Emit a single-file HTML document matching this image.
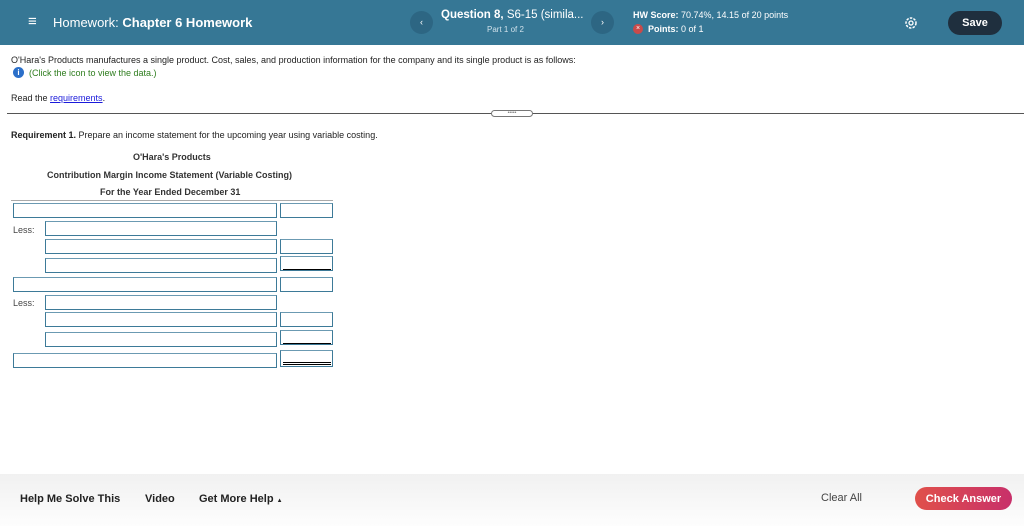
<!DOCTYPE html><html><head><style>
*{margin:0;padding:0;box-sizing:border-box}
body{width:1024px;height:526px;overflow:hidden;background:#fff;font-family:"Liberation Sans",Arial,sans-serif;position:relative;color:#222}
.hdr{position:absolute;left:0;top:0;width:1024px;height:45px;background:#367795;color:#fff}
.a{position:absolute}
.inp{position:absolute;height:15px;border:1px solid #3d7a98;border-top-color:#6b9ab2;background:#fff}
.ul{position:absolute;height:1px;background:#000}
.t{font-size:9px;line-height:10px;position:absolute;white-space:nowrap}
</style></head><body>
<div class="hdr">
 <div class="a" style="left:28px;top:13px;font-size:15px">≡</div>
 <div class="a" style="left:53px;top:15px;font-size:13px">Homework: <b>Chapter 6 Homework</b></div>
 <div class="a" style="left:410px;top:11px;width:23px;height:23px;border-radius:50%;background:#2d6683;font-size:9px;text-align:center;line-height:23px">‹</div>
 <div class="a" style="left:441px;top:9px;font-size:11.5px"><b>Question 8,</b> S6-15 (simila...</div>
 <div class="a" style="left:487px;top:25px;font-size:8px;color:#cfe0ea">Part 1 of 2</div>
 <div class="a" style="left:591px;top:11px;width:23px;height:23px;border-radius:50%;background:#2d6683;font-size:9px;text-align:center;line-height:23px">›</div>
 <div class="a" style="left:633px;top:10px;font-size:9px"><b>HW Score:</b> 70.74%, 14.15 of 20 points</div>
 <div class="a" style="left:633px;top:24px;width:10px;height:10px;border-radius:50%;background:#c94a4a;font-size:7px;text-align:center;line-height:10px">×</div>
 <div class="a" style="left:648px;top:24px;font-size:9px"><b>Points:</b> 0 of 1</div>
 <svg class="a" style="left:904px;top:16px" width="14" height="14" viewBox="0 0 14 14"><circle cx="7" cy="7" r="5" fill="none" stroke="#fff" stroke-width="1.5" stroke-dasharray="2.5 1.2"/><circle cx="7" cy="7" r="2" fill="none" stroke="#fff" stroke-width="1.3"/></svg>
 <div class="a" style="left:948px;top:11px;width:54px;height:24px;border-radius:12px;background:#1f2f3e;font-size:11px;font-weight:bold;text-align:center;line-height:25px">Save</div>
</div>
<div class="t" style="left:11px;top:55px">O'Hara's Products manufactures a single product. Cost, sales, and production information for the company and its single product is as follows:</div>
<div class="a" style="left:13px;top:67px;width:11px;height:11px;border-radius:50%;background:#2b6fc9;color:#fff;font-size:8px;font-weight:bold;text-align:center;line-height:11px">i</div>
<div class="t" style="left:29px;top:68px;color:#2e7d1e">(Click the icon to view the data.)</div>
<div class="t" style="left:11px;top:93px">Read the <span style="color:#1a1adb;text-decoration:underline">requirements</span>.</div>
<div class="a" style="left:7px;top:113px;width:1017px;height:1px;background:#555"></div>
<div class="a" style="left:491px;top:110px;width:42px;height:7px;border:1px solid #777;border-radius:4px;background:#fff;font-size:5px;text-align:center;line-height:4px;color:#777">•••••</div>
<div class="t" style="left:11px;top:130px"><b>Requirement 1.</b> Prepare an income statement for the upcoming year using variable costing.</div>
<div class="t" style="left:133px;top:152px;font-weight:bold;color:#333">O'Hara's Products</div>
<div class="t" style="left:47px;top:170px;font-weight:bold;color:#333">Contribution Margin Income Statement (Variable Costing)</div>
<div class="t" style="left:100px;top:187px;font-weight:bold;color:#333">For the Year Ended December 31</div>
<div class="a" style="left:11px;top:200px;width:322px;height:1px;background:#aaa"></div>
<div class="inp" style="left:13px;top:203px;width:264px"></div><div class="inp" style="left:280px;top:203px;width:53px"></div>
<div class="t" style="left:13px;top:225px;color:#444">Less:</div>
<div class="inp" style="left:45px;top:221px;width:232px"></div>
<div class="inp" style="left:45px;top:239px;width:232px"></div><div class="inp" style="left:280px;top:239px;width:53px"></div>
<div class="inp" style="left:45px;top:258px;width:232px"></div><div class="inp" style="left:280px;top:256px;width:53px"></div>
<div class="ul" style="left:283px;top:269px;width:48px"></div>
<div class="inp" style="left:13px;top:277px;width:264px"></div><div class="inp" style="left:280px;top:277px;width:53px"></div>
<div class="t" style="left:13px;top:298px;color:#444">Less:</div>
<div class="inp" style="left:45px;top:295px;width:232px"></div>
<div class="inp" style="left:45px;top:312px;width:232px"></div><div class="inp" style="left:280px;top:312px;width:53px"></div>
<div class="inp" style="left:45px;top:332px;width:232px"></div><div class="inp" style="left:280px;top:330px;width:53px"></div>
<div class="ul" style="left:283px;top:343px;width:48px"></div>
<div class="inp" style="left:13px;top:353px;width:264px"></div><div class="inp" style="left:280px;top:350px;width:53px;height:17px"></div>
<div class="ul" style="left:283px;top:362px;width:48px"></div><div class="ul" style="left:283px;top:364px;width:48px"></div>
<div class="a" style="left:0;top:474px;width:1024px;height:52px;background:linear-gradient(#f1f1f1,#fdfdfd)"></div>
<div class="a" style="left:20px;top:493px;font-size:11px;font-weight:bold">Help Me Solve This</div>
<div class="a" style="left:145px;top:493px;font-size:11px;font-weight:bold">Video</div>
<div class="a" style="left:199px;top:493px;font-size:11px;font-weight:bold">Get More Help <span style="font-size:6px">▲</span></div>
<div class="a" style="left:821px;top:492px;font-size:11px;color:#444">Clear All</div>
<div class="a" style="left:915px;top:487px;width:97px;height:23px;border-radius:12px;background:linear-gradient(90deg,#e0504a,#c8306a);color:#fff;font-size:11px;font-weight:bold;text-align:center;line-height:24px">Check Answer</div>
</body></html>
